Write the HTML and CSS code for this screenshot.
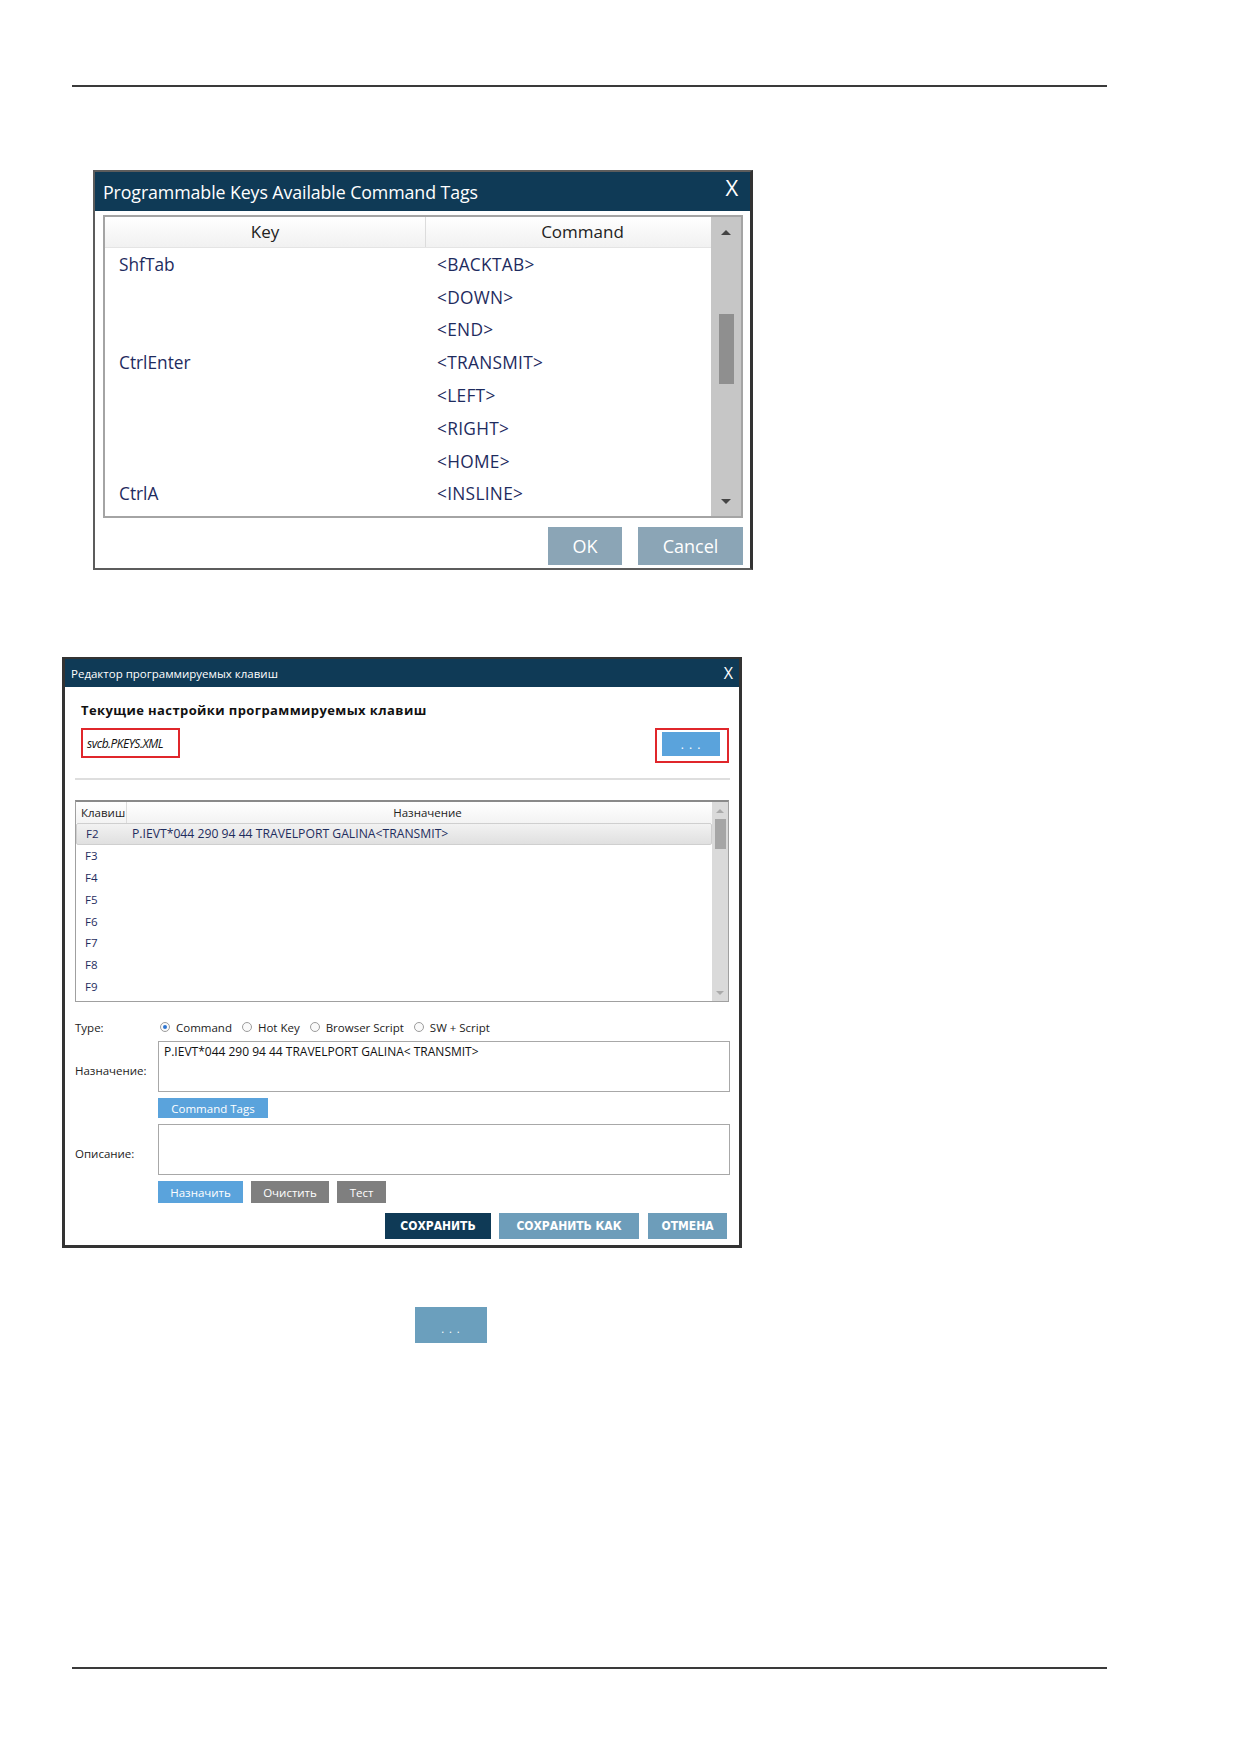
FILE: index.html
```html
<!DOCTYPE html>
<html lang="ru">
<head>
    <meta charset="UTF-8">
    <title>Программируемые клавиши</title>
    <link rel="stylesheet" href="styles.css">
</head>
<body>
<div class="page">
    <div class="rule"></div>

    <!-- список доступных тегов команд -->
    <div class="dialog tags-dialog">
        <div class="tags-title">
            <span>Programmable Keys Available Command Tags</span>
            <span class="tags-close">X</span>
        </div>
        <div class="tags-grid">
            <div class="tags-table">
                <div class="tags-head">
                    <div class="col-key">Key</div>
                    <div class="col-cmd">Command</div>
                </div>
                <div class="tags-row"><div class="col-key">ShfTab</div><div class="col-cmd">&lt;BACKTAB&gt;</div></div>
                <div class="tags-row"><div class="col-key"></div><div class="col-cmd">&lt;DOWN&gt;</div></div>
                <div class="tags-row"><div class="col-key"></div><div class="col-cmd">&lt;END&gt;</div></div>
                <div class="tags-row"><div class="col-key">CtrlEnter</div><div class="col-cmd">&lt;TRANSMIT&gt;</div></div>
                <div class="tags-row"><div class="col-key"></div><div class="col-cmd">&lt;LEFT&gt;</div></div>
                <div class="tags-row"><div class="col-key"></div><div class="col-cmd">&lt;RIGHT&gt;</div></div>
                <div class="tags-row"><div class="col-key"></div><div class="col-cmd">&lt;HOME&gt;</div></div>
                <div class="tags-row"><div class="col-key">CtrlA</div><div class="col-cmd">&lt;INSLINE&gt;</div></div>
            </div>
            <div class="vscroll vscroll-lg">
                <span class="arrow-box"><span class="arrow up"></span></span>
                <span class="thumb"></span>
                <span class="arrow-box end"><span class="arrow down"></span></span>
            </div>
        </div>
        <div class="tags-actions">
            <button class="btn-slate btn-ok">OK</button>
            <button class="btn-slate btn-cancel">Cancel</button>
        </div>
    </div>

    <!-- редактор клавиш -->
    <div class="dialog editor-dialog">
        <div class="editor-title">
            <span>Редактор программируемых клавиш</span>
            <span class="editor-close">X</span>
        </div>
        <div class="editor-body">
            <div class="editor-heading">Текущие настройки программируемых клавиш</div>
            <div class="file-row">
                <div class="file-name">svcb.PKEYS.XML</div>
                <div class="browse-frame"><button class="btn-blue btn-browse">. . .</button></div>
            </div>
            <div class="separator"></div>

            <div class="keys-grid">
                <div class="keys-table">
                    <div class="keys-head">
                        <div class="k-key">Клавиш</div>
                        <div class="k-val">Назначение</div>
                    </div>
                    <div class="keys-row selected"><div class="k-key">F2</div><div class="k-val">P.IEVT*044 290 94 44 TRAVELPORT GALINA&lt;TRANSMIT&gt;</div></div>
                    <div class="keys-row"><div class="k-key">F3</div><div class="k-val"></div></div>
                    <div class="keys-row"><div class="k-key">F4</div><div class="k-val"></div></div>
                    <div class="keys-row"><div class="k-key">F5</div><div class="k-val"></div></div>
                    <div class="keys-row"><div class="k-key">F6</div><div class="k-val"></div></div>
                    <div class="keys-row"><div class="k-key">F7</div><div class="k-val"></div></div>
                    <div class="keys-row"><div class="k-key">F8</div><div class="k-val"></div></div>
                    <div class="keys-row"><div class="k-key">F9</div><div class="k-val"></div></div>
                </div>
                <div class="vscroll vscroll-sm">
                    <span class="arrow-box"><span class="arrow up"></span></span>
                    <span class="thumb"></span>
                    <span class="arrow-box end"><span class="arrow down"></span></span>
                </div>
            </div>

            <div class="form">
                <div class="f-label row-type">Type:</div>
                <div class="radios row-type">
                    <span class="radio checked"></span><span class="r-text">Command</span>
                    <span class="radio"></span><span class="r-text">Hot Key</span>
                    <span class="radio"></span><span class="r-text">Browser Script</span>
                    <span class="radio"></span><span class="r-text">SW + Script</span>
                </div>

                <div class="f-label label-low">Назначение:</div>
                <div class="text-box">P.IEVT*044 290 94 44 TRAVELPORT GALINA&lt; TRANSMIT&gt;</div>

                <div></div>
                <div><button class="btn-blue btn-tags">Command Tags</button></div>

                <div class="f-label label-low">Описание:</div>
                <div class="text-box"></div>

                <div></div>
                <div class="small-actions">
                    <button class="btn-blue btn-assign">Назначить</button>
                    <button class="btn-gray btn-clear">Очистить</button>
                    <button class="btn-gray btn-test">Тест</button>
                </div>
            </div>

            <div class="editor-actions">
                <button class="btn-save">СОХРАНИТЬ</button>
                <button class="btn-steel btn-save-as">СОХРАНИТЬ КАК</button>
                <button class="btn-steel btn-cancel2">ОТМЕНА</button>
            </div>
        </div>
    </div>

    <button class="btn-sample">. . .</button>

    <div class="rule rule-bottom"></div>
</div>
</body>
</html>
```

FILE: styles.css
```css
body {
    margin: 0;
    background: #fff;
    font-family: 'Open Sans', 'Noto Sans', sans-serif;
}
.page {
    width: 1239px;
    height: 1754px;
    padding-top: 85px;
    box-sizing: border-box;
}
.rule {
    margin-left: 72px;
    width: 1035px;
    height: 2px;
    background: #3a3a3a;
}
.rule-bottom {
    margin-top: 324px;
}
button {
    font-family: inherit;
    border: none;
    padding: 0;
    color: #fff;
    cursor: pointer;
}

/* ---------- Command Tags dialog ---------- */
.dialog {
    box-sizing: border-box;
    background: #fff;
}
.tags-dialog {
    margin: 83px 0 0 93px;
    width: 660px;
    height: 400px;
    border: 2px solid #5c5c5c;
    border-right: 3px solid #333;
}
.tags-title {
    height: 39px;
    background: #0f3a56;
    color: #fff;
    display: flex;
    align-items: center;
    justify-content: space-between;
    padding: 0 12px 0 8px;
    font-size: 17.8px;
    letter-spacing: -0.1px;
}
.tags-close {
    font-size: 22px;
    margin-top: -10px;
}
.tags-grid {
    margin: 4px 7px 0 8px;
    height: 303px;
    box-sizing: border-box;
    border: 2px solid #a4a4a4;
    display: flex;
}
.tags-table {
    flex: 1;
}
.tags-head {
    height: 31px;
    display: flex;
    background: linear-gradient(#ffffff, #f1f1f1);
    border-bottom: 1px solid #e4e4e4;
    box-sizing: border-box;
    color: #222;
    font-size: 17px;
}
.tags-head .col-key,
.tags-head .col-cmd {
    text-align: center;
    line-height: 30px;
}
.tags-head .col-key {
    border-right: 1px solid #dcdcdc;
}
.tags-head .col-cmd {
    padding-left: 28px;
}
.col-key {
    width: 321px;
    box-sizing: border-box;
}
.col-cmd {
    flex: 1;
}
.tags-row {
    height: 32.8px;
    display: flex;
    align-items: center;
    color: #1e2b5e;
    font-size: 17.3px;
}
.tags-row .col-key {
    padding-left: 14px;
}
.tags-row .col-cmd {
    padding-left: 11px;
    letter-spacing: 0.3px;
}
.tags-actions {
    display: flex;
    justify-content: flex-end;
    gap: 16px;
    padding-right: 7px;
    margin-top: 9px;
}
.btn-slate {
    height: 38px;
    background: #8ba5b6;
    font-size: 18px;
}
.btn-ok { width: 74px; }
.btn-cancel { width: 105px; }

/* scrollbars */
.vscroll {
    display: flex;
    flex-direction: column;
    align-items: center;
}
.vscroll-lg {
    width: 30px;
    background: #c6c6c6;
}
.vscroll-sm {
    width: 16px;
    background: #dadada;
}
.arrow-box {
    display: flex;
    align-items: center;
    justify-content: center;
}
.arrow-box.end {
    margin-top: auto;
}
.vscroll-lg .arrow-box { height: 30px; width: 100%; }
.vscroll-sm .arrow-box { height: 17px; width: 100%; }
.arrow {
    width: 0;
    height: 0;
    border-left: 5px solid transparent;
    border-right: 5px solid transparent;
}
.vscroll-lg .arrow.up { border-bottom: 5px solid #444; }
.vscroll-lg .arrow.down { border-top: 5px solid #444; }
.vscroll-sm .arrow { border-left-width: 4px; border-right-width: 4px; }
.vscroll-sm .arrow.up { border-bottom: 4px solid #aaa; }
.vscroll-sm .arrow.down { border-top: 4px solid #aaa; }
.vscroll-lg .thumb {
    width: 15px;
    height: 70px;
    margin-top: 67px;
    background: #8f8f8f;
}
.vscroll-sm .thumb {
    width: 11px;
    height: 30px;
    background: #a6a6a6;
}

/* ---------- Editor dialog ---------- */
.editor-dialog {
    margin: 87px 0 0 62px;
    width: 680px;
    height: 591px;
    border: 3px solid #333;
    border-top-width: 2px;
}
.editor-title {
    height: 28px;
    background: #0f3a56;
    color: #fff;
    display: flex;
    align-items: center;
    justify-content: space-between;
    padding: 0 6px;
    font-size: 11.5px;
}
.editor-close {
    font-size: 16px;
}
.editor-body {
    padding: 0 9px 0 10px;
    font-size: 11.5px;
    color: #222;
}
.editor-heading {
    margin: 15px 0 0 6px;
    line-height: 16px;
    font-size: 13px;
    font-weight: 700;
    color: #111;
    letter-spacing: 0.4px;
}
.file-row {
    display: flex;
    justify-content: space-between;
    align-items: flex-start;
    margin-top: 10px;
    padding: 0 1px 0 6px;
}
.file-name {
    width: 99px;
    height: 30px;
    box-sizing: border-box;
    border: 2px solid #e0262b;
    font-style: italic;
    font-size: 12px;
    letter-spacing: -0.5px;
    line-height: 27px;
    padding-left: 4px;
    color: #111;
}
.browse-frame {
    border: 2px solid #e0262b;
    padding: 2px 7px 5px 5px;
    display: flex;
}
.btn-blue {
    background: #5aa3dc;
}
.btn-browse {
    width: 58px;
    height: 24px;
    font-size: 12px;
    letter-spacing: 1px;
}
.separator {
    height: 2px;
    background: #dedede;
    margin-top: 15px;
}

.keys-grid {
    margin: 20px 1px 0 0;
    height: 202px;
    box-sizing: border-box;
    border: 1px solid #a0a0a0;
    border-top: 2px solid #8a8a8a;
    display: flex;
}
.keys-table {
    flex: 1;
}
.keys-head {
    display: flex;
    height: 21px;
    line-height: 21px;
    background: linear-gradient(#ffffff, #f3f3f3);
    color: #222;
}
.keys-head .k-key {
    padding-left: 5px;
    border-right: 1px solid #dcdcdc;
}
.keys-head .k-val {
    text-align: center;
    padding-left: 16px;
}
.k-key {
    width: 51px;
    box-sizing: border-box;
}
.k-val {
    flex: 1;
}
.keys-row {
    display: flex;
    align-items: center;
    height: 21.8px;
    color: #1f2d5e;
    box-sizing: border-box;
}
.keys-row .k-key {
    padding-left: 9px;
}
.keys-row .k-val {
    padding-left: 4px;
    font-size: 12.2px;
}
.keys-row.selected {
    background: linear-gradient(#f2f2f2, #e0e0e0);
    border: 1px solid #cfcfcf;
    border-radius: 2px;
}

.form {
    display: grid;
    grid-template-columns: 83px 1fr;
    margin-top: 16px;
    row-gap: 6px;
}
.f-label {
    display: flex;
    align-items: center;
}
.label-low {
    padding-top: 8px;
}
.row-type {
    height: 18px;
    margin-bottom: -1px;
}
.radios {
    display: flex;
    align-items: center;
}
.radio {
    width: 8px;
    height: 8px;
    border: 1px solid #9c9c9c;
    border-radius: 50%;
    margin: 0 6px 0 2px;
    position: relative;
    background: #fafafa;
}
.radio.checked::after {
    content: '';
    position: absolute;
    left: 2px;
    top: 2px;
    width: 4px;
    height: 4px;
    border-radius: 50%;
    background: #2d74d0;
}
.r-text {
    margin-right: 8px;
}
.text-box {
    height: 51px;
    box-sizing: border-box;
    border: 1px solid #a8a8a8;
    padding: 1px 5px;
    line-height: 17px;
    font-size: 12px;
    color: #111;
}
.btn-tags {
    width: 110px;
    height: 20px;
    font-size: 11.5px;
}
.small-actions {
    display: flex;
    gap: 8px;
}
.small-actions button {
    height: 22px;
    font-size: 11.5px;
}
.btn-gray {
    background: #7f7f7f;
}
.btn-assign { width: 85px; }
.btn-clear { width: 78px; }
.btn-test { width: 49px; }

.editor-actions {
    display: flex;
    justify-content: flex-end;
    gap: 8px;
    margin-top: 10px;
    padding-right: 3px;
}
.editor-actions button {
    height: 26px;
    font-family: 'DejaVu Sans Condensed', 'DejaVu Sans', sans-serif;
    font-weight: 700;
    font-size: 12px;
}
.btn-save {
    width: 106px;
    background: #0f3a56;
}
.btn-steel {
    background: #6d9dba;
}
.btn-save-as { width: 140px; }
.btn-cancel2 { width: 79px; margin-left: 1px; }

.btn-sample {
    display: block;
    margin: 59px 0 0 415px;
    width: 72px;
    height: 36px;
    background: #6b9fbd;
    font-size: 11px;
    letter-spacing: 1px;
    padding-top: 6px;
}
```
